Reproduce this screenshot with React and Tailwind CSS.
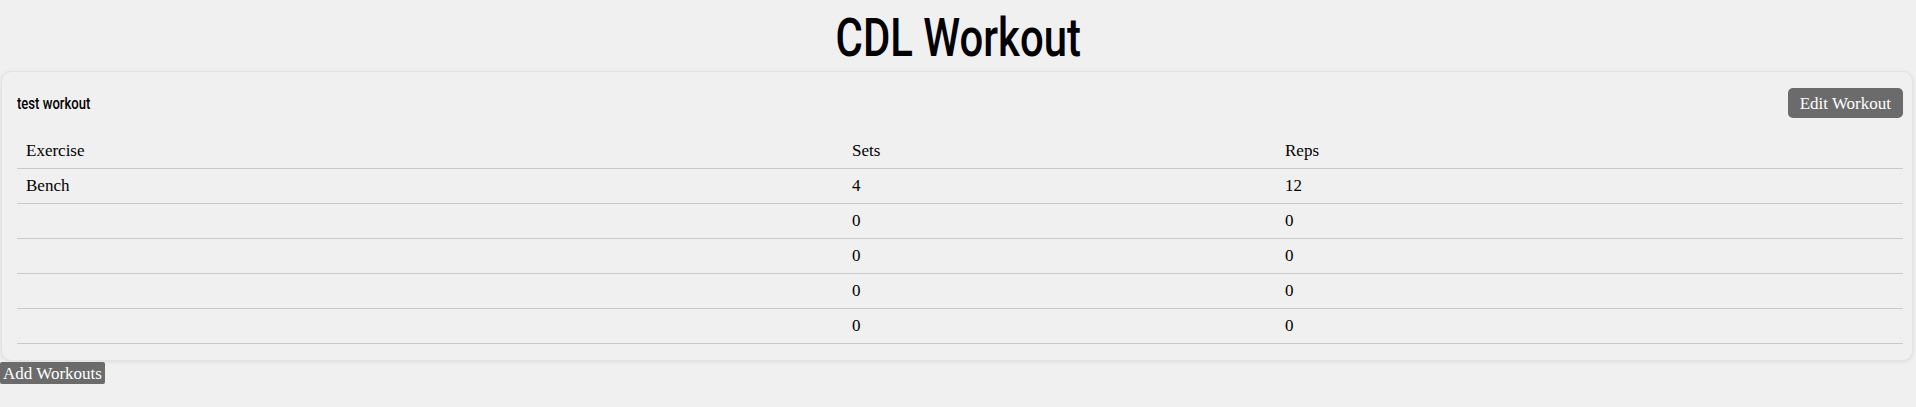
const rows = [
  { exercise: "Bench", sets: 4, reps: 12 },
  { exercise: "", sets: 0, reps: 0 },
  { exercise: "", sets: 0, reps: 0 },
  { exercise: "", sets: 0, reps: 0 },
  { exercise: "", sets: 0, reps: 0 },
];

const serif = "font-['Liberation_Serif',serif] text-[17px]";
const narrow = "font-['Roboto',sans-serif] font-medium inline-block";

const App = () => {
  return (
    <main className={`min-h-[407px] bg-[#f0f0f0] text-black ${serif}`}>
      <h1 className="pt-[13px] pb-[8px] text-center text-[53px] leading-[50px]">
        <span className={`${narrow} scale-x-[0.79]`}>CDL Workout</span>
      </h1>

      <section className="ml-px mr-[3px] rounded-[10px] border border-[#e2e2e2] bg-[#f0f0f0] pl-[15px] pr-[9px] pt-[16px] pb-[16px] shadow-[0_1px_4px_rgba(0,0,0,0.08)]">
        <div className="flex h-[30px] items-center justify-between">
          <h2 className="text-[17px] leading-none">
            <span className={`${narrow} origin-left scale-x-[0.77]`}>test workout</span>
          </h2>
          <button className="h-[30px] rounded-[5px] bg-[#6b6b6b] px-[12px] leading-none text-white">
            Edit Workout
          </button>
        </div>

        <table className="mt-[15px] w-full table-fixed border-collapse">
          <colgroup>
            <col className="w-[826px]" />
            <col className="w-[433px]" />
            <col />
          </colgroup>
          <thead>
            <tr className="h-[35px] border-b border-[#c9c9c9] text-left">
              <th className="pl-[9px] font-normal">Exercise</th>
              <th className="pl-[9px] font-normal">Sets</th>
              <th className="pl-[9px] font-normal">Reps</th>
            </tr>
          </thead>
          <tbody>
            {rows.map((r, i) => (
              <tr key={i} className="h-[35px] border-b border-[#c9c9c9]">
                <td className="pl-[9px]">{r.exercise}</td>
                <td className="pl-[9px]">{r.sets}</td>
                <td className="pl-[9px]">{r.reps}</td>
              </tr>
            ))}
          </tbody>
        </table>
      </section>

      <button className="mt-px h-[22px] rounded-[2px] bg-[#6b6b6b] px-[3px] leading-none text-white">
        Add Workouts
      </button>
    </main>
  );
};

export default App;
